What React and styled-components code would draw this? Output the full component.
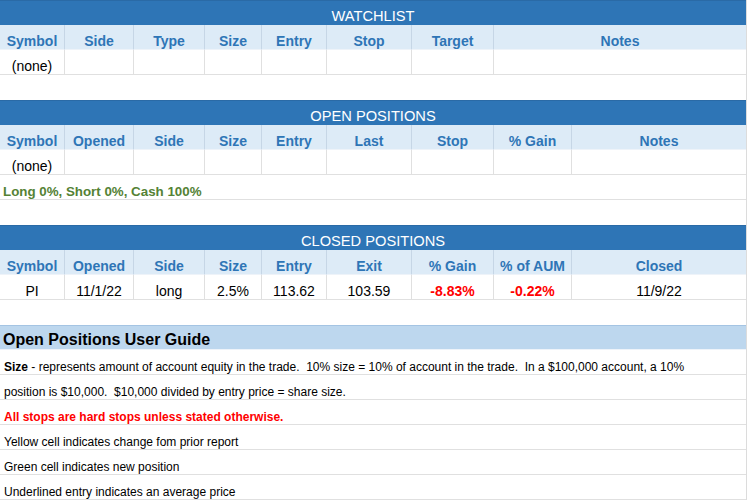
import React from 'react';
import styled, { createGlobalStyle } from 'styled-components';

const GlobalStyle = createGlobalStyle`
  body {
    margin: 0;
    background: #ffffff;
    font-family: 'Liberation Sans', Arial, sans-serif;
  }
`

const Sheet = styled.div`
  width: 747px;
  box-sizing: border-box;
  border-right: 1px solid #dcdcdc;
`

const TitleBar = styled.div`
  height: 25px;
  box-sizing: border-box;
  display: flex;
  align-items: flex-end;
  justify-content: center;
  padding-bottom: 1px;
  background: #2e75b6;
  border-top: 1px solid #2a6aa6;
  color: #ffffff;
  font-size: 14.67px;
`

const Row = styled.div`
  display: grid;
  grid-template-columns: 65px 69px 71px 57px 65px 85px 82px 78px 174px;
  height: 25px;
`

const Cell = styled.div`
  grid-column: span ${p => p.$span || 1};
  box-sizing: border-box;
  display: flex;
  align-items: flex-end;
  justify-content: center;
  white-space: nowrap;
  font-size: 14px;
  background: ${p => (p.$head ? '#ddebf7' : '#ffffff')};
  color: ${p => (p.$head ? '#2e75b6' : p.$loss ? '#ff0000' : '#000000')};
  font-weight: ${p => (p.$head || p.$loss ? 700 : 400)};
  border-right: 1px solid ${p => (p.$head ? '#c6d6e6' : '#e0e0e0')};
  border-bottom: 1px solid ${p => (p.$head ? '#eef3f9' : '#e0e0e0')};
  &:last-child {
    border-right: none;
  }
`

const Summary = styled.div`
  height: 25px;
  box-sizing: border-box;
  display: flex;
  align-items: flex-end;
  padding-left: 3px;
  border-bottom: 1px solid #e0e0e0;
  color: #548235;
  font-weight: 700;
  font-size: 13.33px;
`

const Spacer = styled.div`
  height: 25px;
`

const GuideTitle = styled.div`
  height: 25px;
  box-sizing: border-box;
  display: flex;
  align-items: flex-end;
  padding-left: 3px;
  background: #bdd7ee;
  border-top: 1px solid #a4c4e3;
  border-bottom: 1px solid #eef3f9;
  font-weight: 700;
  font-size: 16px;
  color: #000000;
`

const GuideRow = styled.div`
  height: 25px;
  box-sizing: border-box;
  display: flex;
  align-items: flex-end;
  padding-left: 4px;
  border-bottom: 1px solid #e0e0e0;
  font-size: 12px;
  white-space: pre;
  color: ${p => (p.$alert ? '#ff0000' : '#000000')};
  font-weight: ${p => (p.$alert ? 700 : 400)};

  b {
    font-weight: 700;
  }
`

const watchHeads = ['Symbol', 'Side', 'Type', 'Size', 'Entry', 'Stop', 'Target'];
const openHeads = ['Symbol', 'Opened', 'Side', 'Size', 'Entry', 'Last', 'Stop', '% Gain', 'Notes'];
const closedHeads = ['Symbol', 'Opened', 'Side', 'Size', 'Entry', 'Exit', '% Gain', '% of AUM', 'Closed'];

const closedTrades = [
  { symbol: 'PI', opened: '11/1/22', side: 'long', size: '2.5%', entry: '113.62', exit: '103.59', gain: '-8.83%', aum: '-0.22%', closed: '11/9/22' },
];

const App = () => {
  return (
    <>
      <GlobalStyle />
      <Sheet>
        <TitleBar>WATCHLIST</TitleBar>
        <Row>
          {watchHeads.map(h => <Cell $head key={h}>{h}</Cell>)}
          <Cell $head $span={2}>Notes</Cell>
        </Row>
        <Row>
          <Cell>(none)</Cell>
          {watchHeads.slice(1).map(h => <Cell key={h} />)}
          <Cell $span={2} />
        </Row>
        <Spacer />

        <TitleBar>OPEN POSITIONS</TitleBar>
        <Row>
          {openHeads.map(h => <Cell $head key={h}>{h}</Cell>)}
        </Row>
        <Row>
          <Cell>(none)</Cell>
          {openHeads.slice(1).map(h => <Cell key={h} />)}
        </Row>
        <Summary>Long 0%, Short 0%, Cash 100%</Summary>
        <Spacer />

        <TitleBar>CLOSED POSITIONS</TitleBar>
        <Row>
          {closedHeads.map(h => <Cell $head key={h}>{h}</Cell>)}
        </Row>
        {closedTrades.map(t => (
          <Row key={t.symbol}>
            <Cell>{t.symbol}</Cell>
            <Cell>{t.opened}</Cell>
            <Cell>{t.side}</Cell>
            <Cell>{t.size}</Cell>
            <Cell>{t.entry}</Cell>
            <Cell>{t.exit}</Cell>
            <Cell $loss>{t.gain}</Cell>
            <Cell $loss>{t.aum}</Cell>
            <Cell>{t.closed}</Cell>
          </Row>
        ))}
        <Spacer />

        <GuideTitle>Open Positions User Guide</GuideTitle>
        <GuideRow>
          <b>Size</b>{' - represents amount of account equity in the trade.  10% size = 10% of account in the trade.  In a $100,000 account, a 10%'}
        </GuideRow>
        <GuideRow>{'position is $10,000.  $10,000 divided by entry price = share size.'}</GuideRow>
        <GuideRow $alert>All stops are hard stops unless stated otherwise.</GuideRow>
        <GuideRow>Yellow cell indicates change fom prior report</GuideRow>
        <GuideRow>Green cell indicates new position</GuideRow>
        <GuideRow>Underlined entry indicates an average price</GuideRow>
      </Sheet>
    </>
  );
};

export default App;
